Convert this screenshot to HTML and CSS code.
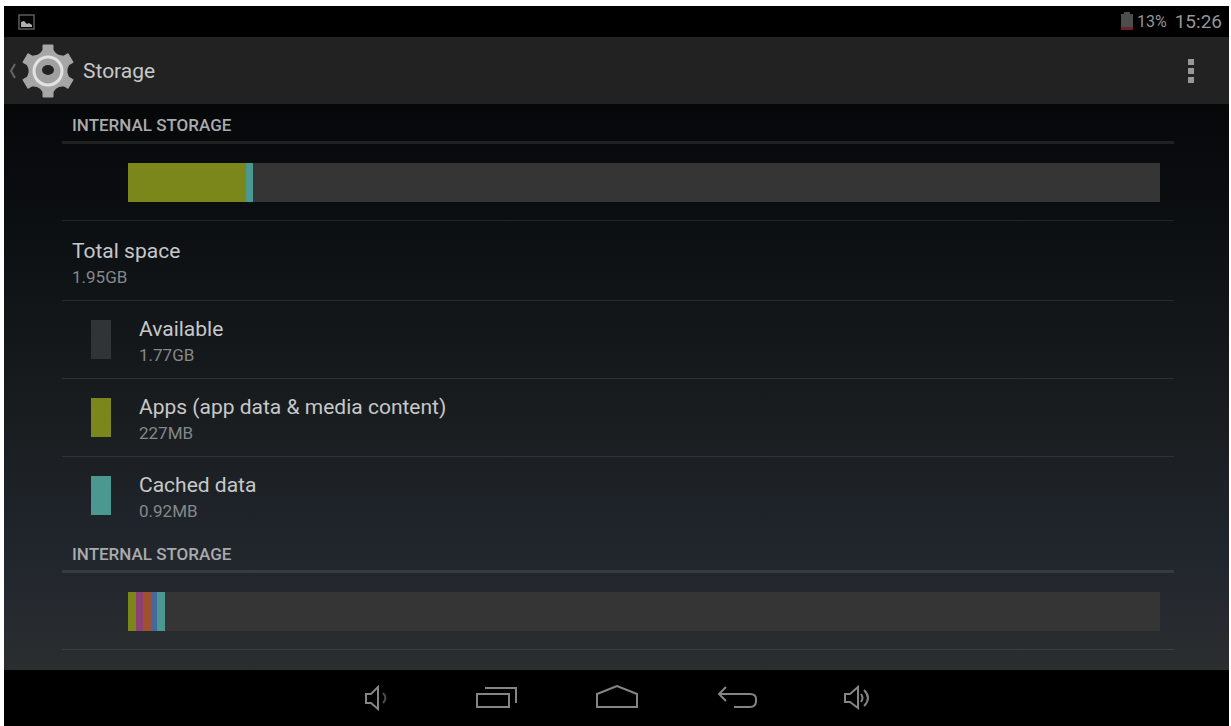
FILE: index.html
```html
<!DOCTYPE html>
<html lang="en">
<head>
  <meta charset="UTF-8" />
  <meta name="viewport" content="width=device-width, initial-scale=1.0"/>
  <title>Storage</title>
  <link rel="stylesheet" href="styles.css">
</head>
<body>
  <div class="screen">
    <div class="status-bar">
      <svg class="picture-icon" width="17" height="16" viewBox="0 0 17 16" aria-hidden="true">
        <rect x="1" y="1" width="15" height="14" fill="none" stroke="#5c5c5c" stroke-width="1.5"/>
        <path d="M3 13V8l3-1 3 3 2-1 3 2v2z" fill="#b0b0b0"/>
      </svg>
      <div class="status-info">
        <svg width="14" height="19" viewBox="0 0 14 19" aria-hidden="true">
          <path d="M4 0h6v2h3v13H1V2h3z" fill="#4c4e4e"/>
          <path d="M1 15h12v3H1z" fill="#6e2230"/>
        </svg>
        <span class="battery-level">13%</span>
        <span class="clock">15:26</span>
      </div>
    </div>

    <header class="action-bar">
      <button class="up-button" aria-label="Back">
        <svg width="8" height="18" viewBox="0 0 8 18">
          <path d="M6 2L2 9l4 7" fill="none" stroke="#666" stroke-width="2"/>
        </svg>
        <svg width="54" height="56" viewBox="-27 -28 54 56">
          <g fill="#a6a6a6" stroke="#a6a6a6" stroke-width="1" stroke-linejoin="round">
            <circle r="19"/>
            <path id="teeth" d="M-8-17L-5-21V-26H5V-21L8-17V17L5 21V26H-5V21L-8 17z"/>
            <use href="#teeth" transform="rotate(60)"/>
            <use href="#teeth" transform="rotate(120)"/>
          </g>
          <circle r="14" fill="#a0a0a0" stroke="#e2e2e2" stroke-width="3"/>
          <ellipse cy="-1" rx="6" ry="5" fill="#222"/>
        </svg>
      </button>
      <h1>Storage</h1>
      <button class="menu-button" aria-label="More options">
        <svg width="8" height="26" viewBox="0 0 8 26">
          <path d="M1 1h6v6H1zM1 10h6v6H1zM1 19h6v6H1z" fill="#979797"/>
        </svg>
      </button>
    </header>

    <main class="content">
      <section>
        <h2>INTERNAL STORAGE</h2>
        <div class="usage">
          <div class="usage-bar">
            <div class="apps" style="width: 11.4%"></div>
            <div class="cached" style="width: 0.7%"></div>
          </div>
        </div>
        <ul class="storage-list">
          <li class="total">
            <div class="item-text">
              <h3>Total space</h3>
              <p>1.95GB</p>
            </div>
          </li>
          <li>
            <div class="swatch available"></div>
            <div class="item-text">
              <h3>Available</h3>
              <p>1.77GB</p>
            </div>
          </li>
          <li>
            <div class="swatch apps"></div>
            <div class="item-text">
              <h3>Apps (app data &amp; media content)</h3>
              <p>227MB</p>
            </div>
          </li>
          <li>
            <div class="swatch cached"></div>
            <div class="item-text">
              <h3>Cached data</h3>
              <p>0.92MB</p>
            </div>
          </li>
        </ul>
      </section>

      <section>
        <h2>INTERNAL STORAGE</h2>
        <div class="usage">
          <div class="usage-bar">
            <div class="apps" style="width: 0.8%"></div>
            <div class="pictures" style="width: 0.7%"></div>
            <div class="audio" style="width: 0.7%"></div>
            <div class="downloads" style="width: 0.6%"></div>
            <div class="cached" style="width: 0.8%"></div>
          </div>
        </div>
      </section>
    </main>

    <nav class="nav-bar">
      <button aria-label="Volume down">
        <svg width="26" height="26" viewBox="0 0 26 26">
          <path d="M2 9h5l7-7v22l-7-6H2z"/>
          <path d="M19 8q5 5 0 10" class="dim"/>
        </svg>
      </button>
      <button aria-label="Recent apps">
        <svg width="44" height="26" viewBox="0 0 44 26">
          <path d="M2 9h32v13H2z"/>
          <path d="M10 3h31v15"/>
        </svg>
      </button>
      <button aria-label="Home">
        <svg width="44" height="26" viewBox="0 0 44 26">
          <path d="M2 22V9l20-8 20 8v13z"/>
        </svg>
      </button>
      <button aria-label="Back">
        <svg width="42" height="26" viewBox="0 0 42 26">
          <path d="M18 22h16q6 0 6-6v-2q0-5-6-5H4"/>
          <path d="M10 2L3 9l7 7"/>
        </svg>
      </button>
      <button aria-label="Volume up">
        <svg width="28" height="26" viewBox="0 0 28 26">
          <path d="M2 9h5l8-7v21l-8-6H2z"/>
          <path d="M18 9q3 4 0 8M21 5q8 8 0 16"/>
        </svg>
      </button>
    </nav>
  </div>
</body>
</html>
```
FILE: styles.css
```css
* { box-sizing: border-box; }

body {
  margin: 0;
  padding: 6px 2px 0 4px;
  min-height: 100vh;
  display: flex;
  background: #fff;
  color: #c6c8c9;
  font-family: Roboto, sans-serif;
}

h1, h2, h3, p, ul { margin: 0; padding: 0; }
ul { list-style: none; }
button { display: flex; align-items: center; justify-content: center; padding: 0; border: none; background: none; cursor: pointer; }
svg { display: block; }

.screen {
  flex: 1;
  display: flex;
  flex-direction: column;
  background: #000;
}

/* --- Top bars --- */
.status-bar {
  display: flex;
  justify-content: space-between;
  align-items: center;
  height: 31px;
  padding: 0 7px 0 14px;
}
.status-info { display: flex; align-items: center; gap: 3px; color: #959595; }
.battery-level { font-size: 16px; }
.clock { font-size: 19px; margin-left: 5px; }

.action-bar {
  display: flex;
  align-items: center;
  height: 67px;
  padding: 0 24px 0 5px;
  background: #222;
}
.up-button { gap: 4px; }
h1 { margin-left: 8px; font-size: 21px; font-weight: 400; line-height: 28px; }
.menu-button { width: 28px; height: 48px; margin-left: auto; }

/* --- Storage list --- */
.content {
  flex: 1;
  padding: 2px 55px 0 58px;
  background: linear-gradient(#060709, #0e1215 28%, #1a1e21 58%, #20252c 77%, #262a2f 90%, #2b2e2f);
}
h2 {
  padding: 7px 10px 4px;
  border-bottom: 3px solid #ffffff18;
  font-size: 17px;
  font-weight: 500;
  line-height: 24px;
  color: #a9abac;
}
.usage { padding: 19px 14px 18px 66px; border-bottom: 1px solid #ffffff18; }
.usage-bar { display: flex; height: 39px; background: #353535; }

.storage-list li {
  display: flex;
  gap: 28px;
  padding: 14px 10px 11px 29px;
  border-bottom: 1px solid #ffffff18;
}
.storage-list li:last-child { border-bottom: none; padding-bottom: 12px; }
.storage-list .total { padding: 16px 10px 11px; }
.swatch { width: 20px; height: 39px; margin-top: 5px; }
h3 { font-size: 21px; font-weight: 400; line-height: 28px; }
.item-text p { font-size: 17px; line-height: 24px; color: #85888a; }

.available { background: #313437; }
.apps { background: #7b871b; }
.cached { background: #4b9891; }
.pictures { background: #8d4172; }
.audio { background: #a1502f; }
.downloads { background: #4468a0; }

/* --- Navigation bar --- */
.nav-bar { display: flex; justify-content: center; height: 56px; }
.nav-bar button { width: 120px; }
.nav-bar path { fill: none; stroke: #858585; stroke-width: 2; }
.nav-bar .dim { stroke: #4c4c4c; }
```
